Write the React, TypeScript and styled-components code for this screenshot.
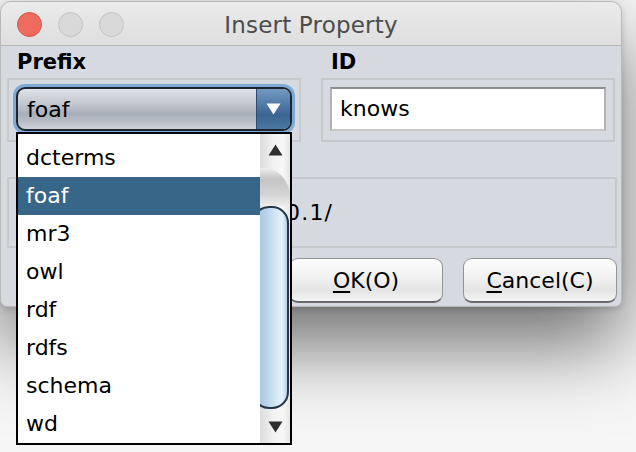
import React from "react";
import styled, { createGlobalStyle } from "styled-components";

const GlobalStyle = createGlobalStyle`
  html, body {
    margin: 0;
    padding: 0;
    background: #f7f7f7;
    font-family: "DejaVu Sans", "Liberation Sans", sans-serif;
  }
  * { box-sizing: border-box; }
`;

const Desktop = styled.div`
  width: 636px;
  height: 452px;
  overflow: hidden;
  background: #f6f6f6;
`;

const Window = styled.div`
  position: relative;
  width: 622px;
  height: 306px;
  margin-top: 1px;
  border: 1px solid #b9b9b9;
  border-radius: 11px 11px 7px 7px;
  background: #d6d9df;
  box-shadow: 0 38px 80px 0 rgba(0, 0, 0, 0.55), 0 2px 6px rgba(0, 0, 0, 0.15);
  display: flex;
  flex-direction: column;
`;

const TitleBar = styled.div`
  height: 44px;
  flex: none;
  display: grid;
  grid-template-columns: 1fr auto 1fr;
  align-items: center;
  border-bottom: 1px solid #b6b6b6;
  border-radius: 10px 10px 0 0;
  background: linear-gradient(to bottom, #ebebeb 0%, #dedede 100%);
`;

const Lights = styled.div`
  display: flex;
  gap: 16px;
  padding-left: 16px;
  padding-top: 1px;
`;

const Light = styled.span<{ $red?: boolean }>`
  width: 25px;
  height: 25px;
  border-radius: 50%;
  background: ${(p) => (p.$red ? "#ef6b60" : "#d9d9d9")};
  border: 1px solid ${(p) => (p.$red ? "#d5564c" : "#c3c3c3")};
`;

const Title = styled.div`
  font-size: 23px;
  color: #4c4c4c;
  letter-spacing: 0.2px;
  padding-top: 2px;
`;

const Content = styled.div`
  flex: 1;
  display: flex;
  flex-direction: column;
  padding: 0 4px 4px 6px;
`;

const TopRow = styled.div`
  display: grid;
  grid-template-columns: 294px 294px;
  column-gap: 20px;
`;

const Column = styled.div`
  display: flex;
  flex-direction: column;
`;

const Label = styled.div`
  height: 32px;
  padding: 3px 0 0 10px;
  font-size: 21px;
  font-weight: bold;
  color: #000;
  line-height: 26px;
`;

const Box = styled.div`
  border: 2px solid #c6c8cc;
  padding: 7px 7px 9px 7px;
`;

const Combo = styled.div`
  height: 44px;
  display: flex;
  border: 2px solid #1e2530;
  border-radius: 9px;
  overflow: hidden;
  box-shadow: 0 0 0 3px #7ea8d6;
  background: linear-gradient(
    to bottom,
    #dfe2e7 0%,
    #c4c8d0 35%,
    #a9afba 62%,
    #b8bcc5 82%,
    #cfd2d8 100%
  );
`;

const ComboText = styled.div`
  flex: 1;
  font-size: 22px;
  line-height: 42px;
  padding-left: 9px;
  color: #000;
`;

const ComboArrow = styled.div`
  width: 34px;
  display: flex;
  align-items: center;
  justify-content: center;
  border-left: 1px solid #2c4b6e;
  background: linear-gradient(
    to bottom,
    #7299c0 0%,
    #4f7aa6 40%,
    #3a6591 65%,
    #4b77a3 100%
  );
`;

const TextField = styled.div`
  height: 44px;
  background: #fff;
  border: 2px solid #b2b2b2;
  border-top-color: #8d8d8d;
  border-bottom-color: #c8c8c8;
  font-size: 22px;
  line-height: 40px;
  padding-left: 8px;
  color: #000;
`;

const NamespacePanel = styled.div`
  margin-top: 35px;
  height: 71px;
  border: 2px solid #c6c8cc;
  display: flex;
  align-items: center;
  padding-left: 6px;
  font-size: 22px;
  color: #000;
  letter-spacing: 1.2px;
`;

const ButtonRow = styled.div`
  margin-top: 10px;
  display: flex;
  justify-content: flex-end;
  gap: 20px;
`;

const Button = styled.div`
  width: 154px;
  height: 45px;
  border: 1.5px solid #949494;
  border-bottom: 2.5px solid #6a6a6a;
  border-radius: 9px;
  background: linear-gradient(
    to bottom,
    #fdfdfd 0%,
    #f1f1f1 45%,
    #e4e4e4 75%,
    #f4f4f4 100%
  );
  display: flex;
  align-items: center;
  justify-content: center;
  font-size: 22px;
  color: #000;
`;

const Mnemonic = styled.span`
  text-decoration: underline;
  text-underline-offset: 3px;
`;

const Popup = styled.div`
  position: absolute;
  left: 15px;
  top: 130px;
  width: 276px;
  height: 313px;
  border: 2px solid #000;
  background: #fff;
  display: flex;
  z-index: 5;
`;

const List = styled.div`
  flex: 1;
  padding-top: 5px;
  display: flex;
  flex-direction: column;
`;

const Item = styled.div<{ $selected?: boolean }>`
  height: 38px;
  line-height: 38px;
  font-size: 22px;
  padding-left: 8px;
  color: ${(p) => (p.$selected ? "#fff" : "#000")};
  background: ${(p) => (p.$selected ? "#386689" : "transparent")};
`;

const ScrollBar = styled.div`
  width: 30px;
  display: flex;
  flex-direction: column;
  overflow: hidden;
  background: linear-gradient(to right, #dcdcdc 0%, #f2f2f2 45%, #f7f7f7 75%, #e6e6e6 100%);
`;

const ScrollArrow = styled.div`
  height: 32px;
  flex: none;
  display: flex;
  align-items: center;
  justify-content: center;
`;

const Track = styled.div`
  flex: 1;
  display: flex;
  flex-direction: column;
`;

const TrackCap = styled.div`
  height: 38px;
  flex: none;
  background: linear-gradient(to bottom, #ededed 0%, #c4c4c4 30%, #d4d4d4 70%, #ececec 100%);
  border-top-right-radius: 26px 38px;
  margin-right: -2px;
  margin-top: 2px;
`;

const Thumb = styled.div`
  height: 203px;
  margin-left: -8px;
  width: 37px;
  flex: none;
  border: 2px solid #25364b;
  border-radius: 17px;
  background: linear-gradient(
    to right,
    #9fbddb 0%,
    #bcd4eb 40%,
    #d8e9f7 70%,
    #e6f2fb 85%,
    #b9cfe4 100%
  );
`;

const UpTri = () => (
  <svg width="15" height="12" viewBox="0 0 15 12">
    <path d="M7.5 0.5 L14.5 11.5 L0.5 11.5 Z" fill="#2f2f2f" />
  </svg>
);

const DownTri = ({ color = "#2f2f2f" }: { color?: string }) => (
  <svg width="15" height="12" viewBox="0 0 15 12">
    <path d="M0.5 0.5 L14.5 0.5 L7.5 11.5 Z" fill={color} />
  </svg>
);

const prefixes = ["dcterms", "foaf", "mr3", "owl", "rdf", "rdfs", "schema", "wd"];

export default function App() {
  return (
    <>
      <GlobalStyle />
      <Desktop>
        <Window>
          <TitleBar>
            <Lights>
              <Light $red />
              <Light />
              <Light />
            </Lights>
            <Title>Insert Property</Title>
            <div />
          </TitleBar>
          <Content>
            <TopRow>
              <Column>
                <Label>Prefix</Label>
                <Box>
                  <Combo>
                    <ComboText>foaf</ComboText>
                    <ComboArrow>
                      <DownTri color="#ffffff" />
                    </ComboArrow>
                  </Combo>
                </Box>
              </Column>
              <Column>
                <Label>ID</Label>
                <Box>
                  <TextField>knows</TextField>
                </Box>
              </Column>
            </TopRow>
            <NamespacePanel>http://xmlns.com/foaf/0.1/</NamespacePanel>
            <ButtonRow>
              <Button>
                <Mnemonic>O</Mnemonic>K(O)
              </Button>
              <Button>
                <Mnemonic>C</Mnemonic>ancel(C)
              </Button>
            </ButtonRow>
          </Content>
          <Popup>
            <List>
              {prefixes.map((p) => (
                <Item key={p} $selected={p === "foaf"}>
                  {p}
                </Item>
              ))}
            </List>
            <ScrollBar>
              <ScrollArrow>
                <UpTri />
              </ScrollArrow>
              <Track>
                <TrackCap />
                <Thumb />
              </Track>
              <ScrollArrow>
                <DownTri />
              </ScrollArrow>
            </ScrollBar>
          </Popup>
        </Window>
      </Desktop>
    </>
  );
}
